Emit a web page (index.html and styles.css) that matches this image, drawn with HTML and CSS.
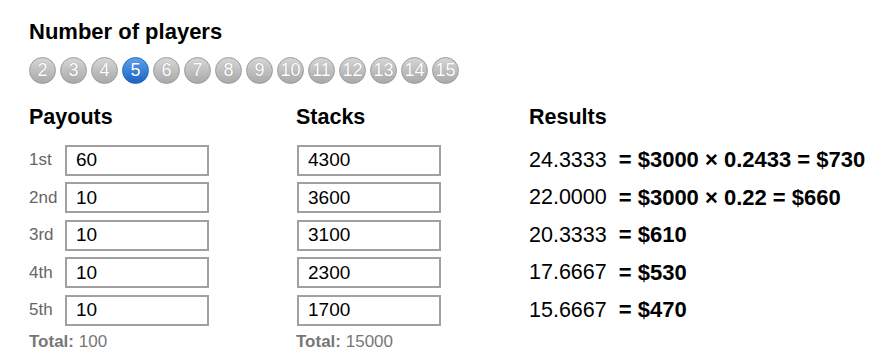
FILE: index.html
```html
<!DOCTYPE html>
<html lang="en">
  <head>
    <meta charset="UTF-8" />
    <meta name="viewport" content="width=device-width, initial-scale=1.0" />
    <title>ICM Calculator</title>
    <link rel="stylesheet" href="styles.css">
  </head>
  <body>
    <div class="page">
      <h2 class="title">Number of players</h2>
      <div class="players">
        <span class="player">2</span>
        <span class="player">3</span>
        <span class="player">4</span>
        <span class="player active">5</span>
        <span class="player">6</span>
        <span class="player">7</span>
        <span class="player">8</span>
        <span class="player">9</span>
        <span class="player">10</span>
        <span class="player">11</span>
        <span class="player">12</span>
        <span class="player">13</span>
        <span class="player">14</span>
        <span class="player">15</span>
      </div>

      <div class="columns">
        <div class="column payouts">
          <h3>Payouts</h3>
          <div class="rows">
            <div class="row"><span class="place">1st</span><input class="field" value="60" /></div>
            <div class="row"><span class="place">2nd</span><input class="field" value="10" /></div>
            <div class="row"><span class="place">3rd</span><input class="field" value="10" /></div>
            <div class="row"><span class="place">4th</span><input class="field" value="10" /></div>
            <div class="row"><span class="place">5th</span><input class="field" value="10" /></div>
          </div>
          <p class="total"><b>Total:</b> 100</p>
        </div>

        <div class="column stacks">
          <h3>Stacks</h3>
          <div class="rows">
            <div class="row"><input class="field" value="4300" /></div>
            <div class="row"><input class="field" value="3600" /></div>
            <div class="row"><input class="field" value="3100" /></div>
            <div class="row"><input class="field" value="2300" /></div>
            <div class="row"><input class="field" value="1700" /></div>
          </div>
          <p class="total"><b>Total:</b> 15000</p>
        </div>

        <div class="column results">
          <h3>Results</h3>
          <div class="rows">
            <div class="row"><span class="equity">24.3333</span><b>= $3000 × 0.2433 = $730</b></div>
            <div class="row"><span class="equity">22.0000</span><b>= $3000 × 0.22 = $660</b></div>
            <div class="row"><span class="equity">20.3333</span><b>= $610</b></div>
            <div class="row"><span class="equity">17.6667</span><b>= $530</b></div>
            <div class="row"><span class="equity">15.6667</span><b>= $470</b></div>
          </div>
        </div>
      </div>
    </div>
  </body>
</html>
```

FILE: styles.css
```css
body {
  margin: 0;
  background: #fff;
  color: #000;
  font-family: "Liberation Sans", Arial, sans-serif;
}
.page {
  padding: 19px 0 0 29px;
}
.title {
  margin: 0;
  font-size: 22px;
  line-height: 26px;
  font-weight: bold;
}
.players {
  display: flex;
  gap: 4px;
  margin-top: 12px;
}
.player {
  box-sizing: border-box;
  width: 27px;
  height: 27px;
  border-radius: 50%;
  border: 1px solid #9a9a9a;
  background: linear-gradient(#d6d6d6, #a9a9a9);
  color: #fff;
  font-size: 18px;
  display: flex;
  justify-content: center;
  align-items: center;
  text-shadow: 0 0 1px rgba(0, 0, 0, 0.3);
}
.player.active {
  border-color: #2465b8;
  background: linear-gradient(#5aa2ea, #1b63c6);
}
.columns {
  display: flex;
  margin-top: 21px;
}
.column h3 {
  margin: 0;
  font-size: 21.5px;
  line-height: 24px;
}
.payouts {
  width: 267px;
}
.stacks {
  width: 233px;
}
.rows {
  display: flex;
  flex-direction: column;
  gap: 6.5px;
  margin-top: 15.5px;
}
.row {
  display: flex;
  align-items: center;
  height: 31px;
}
.place {
  width: 36px;
  color: #666;
  font-size: 17px;
}
.stacks .row {
  padding-left: 1px;
}
.field {
  box-sizing: border-box;
  width: 144px;
  height: 31px;
  border: 2px solid #a0a0a0;
  padding: 0 9px;
  font-family: "Liberation Sans", Arial, sans-serif;
  font-size: 19px;
  color: #000;
  outline: none;
}
.total {
  margin: 6px 0 0;
  font-size: 17px;
  color: #777;
}
.results .row {
  font-size: 21.5px;
}
.results b {
  font-size: 22px;
}
.equity {
  margin-right: 12px;
}
```
